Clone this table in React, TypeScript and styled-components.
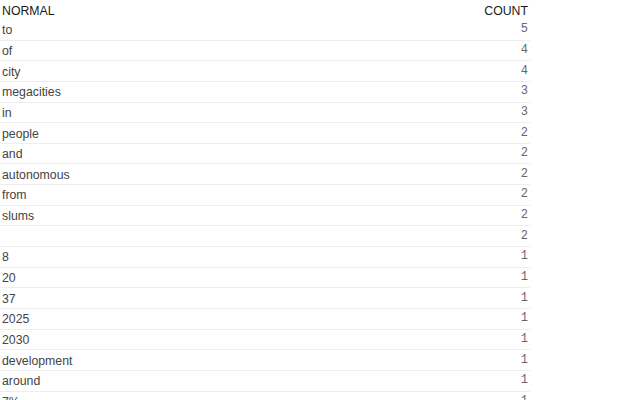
import React from "react";
import styled, { createGlobalStyle } from "styled-components";

const GlobalStyle = createGlobalStyle`
    html, body {
        margin: 0;
        padding: 0;
        background: #ffffff;
        font-family: "Liberation Sans", Arial, sans-serif;
    }
`;

const Table = styled.table`
    width: 530px;
    border-collapse: collapse;
    font-size: 12.3px;
`;

const HeadCell = styled.th<{ align: string }>`
    font-weight: normal;
    color: #1a1a1a;
    text-align: ${(props) => props.align};
    padding: 3px 2px 0 2px;
    height: 17px;
    line-height: 17px;
`;

const Row = styled.tr`
    border-bottom: solid 1px #eeeeee;
`;

const WordCell = styled.td`
    color: #444444;
    padding: 2px 2px 0 2px;
    height: 17.65px;
    line-height: 17px;
`;

const CountCell = styled.td`
    color: #666666;
    font-family: "Liberation Mono", "Courier New", monospace;
    font-size: 12px;
    text-align: right;
    padding: 1px 2px;
    line-height: 17px;
`;

const rows: [string, number][] = [
    ["to", 5],
    ["of", 4],
    ["city", 4],
    ["megacities", 3],
    ["in", 3],
    ["people", 2],
    ["and", 2],
    ["autonomous", 2],
    ["from", 2],
    ["slums", 2],
    ["", 2],
    ["8", 1],
    ["20", 1],
    ["37", 1],
    ["2025", 1],
    ["2030", 1],
    ["development", 1],
    ["around", 1],
    ["7%", 1]
];

const App: React.FC = () => {
    return (
        <>
            <GlobalStyle />
            <Table>
                <thead>
                    <tr>
                        <HeadCell align="left">NORMAL</HeadCell>
                        <HeadCell align="right">COUNT</HeadCell>
                    </tr>
                </thead>
                <tbody>
                    {rows.map(([word, count], i) => (
                        <Row key={i}>
                            <WordCell>{word}</WordCell>
                            <CountCell>{count}</CountCell>
                        </Row>
                    ))}
                </tbody>
            </Table>
        </>
    );
};

export default App;
